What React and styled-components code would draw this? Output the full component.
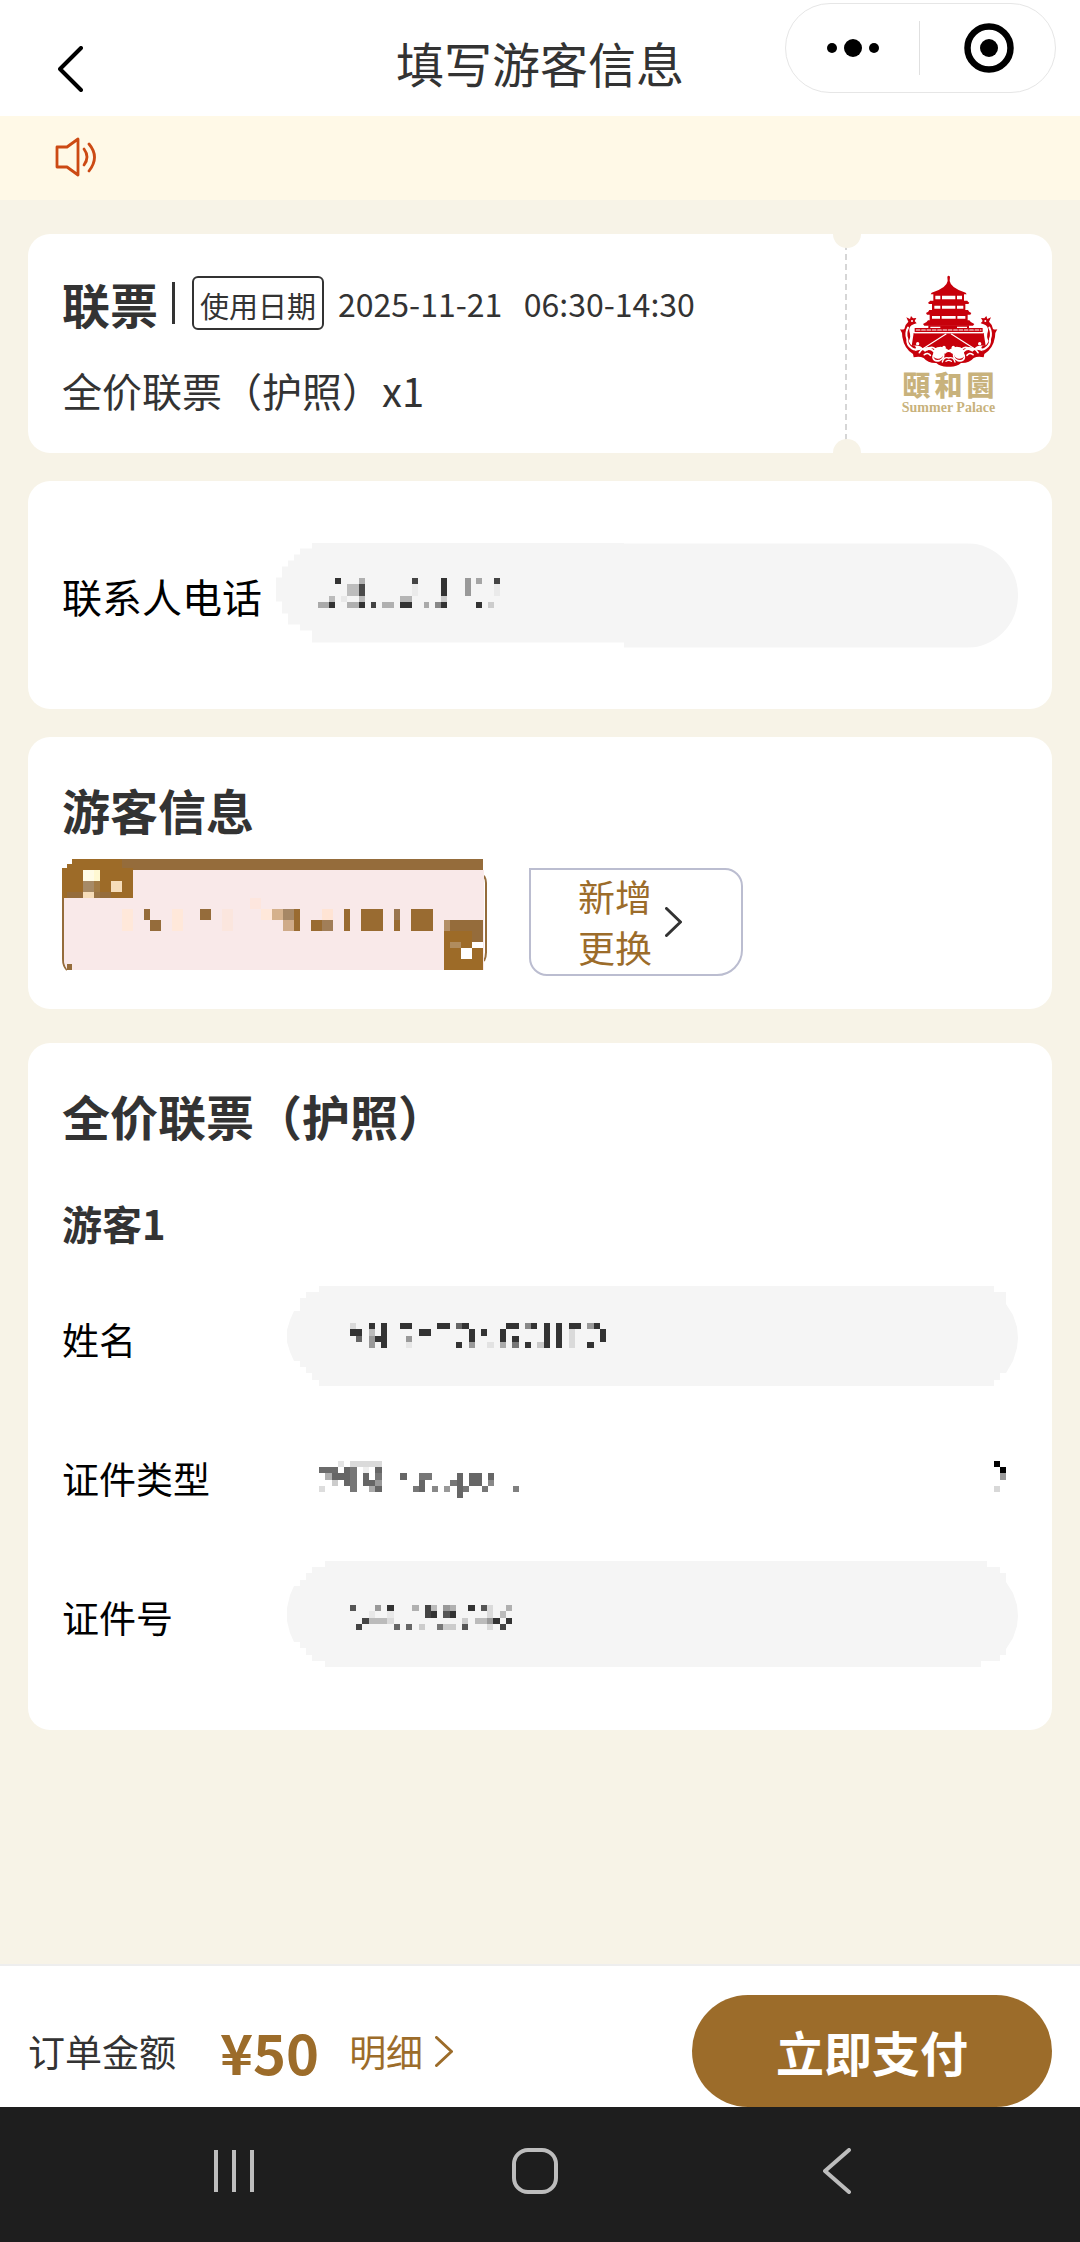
import React from 'react';
import styled, { createGlobalStyle } from 'styled-components';

const GlobalStyle = createGlobalStyle`
    * {
        box-sizing: border-box;
    }
    body {
        margin: 0;
        background: #f7f3e7;
        color: #333333;
        font-family: 'Noto Sans CJK SC', 'Noto Sans', sans-serif;
    }
    h1, h2, h3, p {
        margin: 0;
    }
    button, input, select {
        font-family: inherit;
        padding: 0;
        border: none;
        background: transparent;
        color: inherit;
    }
    svg {
        display: block;
        flex: none;
    }
`

const Page = styled.div`
    min-height: 100vh;
    display: flex;
    flex-direction: column;
`

const Header = styled.header`
    display: grid;
    grid-template-columns: 1fr auto 1fr;
    height: 116px;
    background: #ffffff;
    .header__back {
        justify-self: start;
        align-self: start;
        margin: 46px 0 0 58px;
    }
    .header__title {
        margin-top: 30px;
        font-size: 48px;
        font-weight: normal;
        line-height: 64px;
    }
`

const Capsule = styled.div`
    justify-self: end;
    margin: 3px 24px 0 0;
    display: flex;
    align-items: center;
    width: 271px;
    height: 90px;
    border: 1px solid #e6e6e6;
    border-radius: 45px;
    button {
        flex: 1;
        display: flex;
        justify-content: center;
    }
    button + button {
        height: 54px;
        align-items: center;
        padding-left: 2px;
        border-left: 1px solid #e0e0e0;
    }
`

const Notice = styled.div`
    display: flex;
    align-items: center;
    height: 84px;
    padding: 0 55px 2px;
    background: #fff9e7;
`

const Content = styled.main`
    flex: 1;
    display: flex;
    flex-direction: column;
    gap: 28px;
    padding: 34px 28px;
`

const Card = styled.section`
    padding: 40px 34px 33px;
    border-radius: 22px;
    background: #ffffff;
`

const TicketCard = styled(Card)`
    position: relative;
    display: grid;
    grid-template-columns: 1fr 207px;
    padding: 0;
    overflow: hidden;
`

const TicketInfo = styled.div`
    padding: 42px 34px 35px;
    .ticket__row {
        display: flex;
        align-items: center;
        gap: 14px;
        height: 54px;
        white-space: pre;
    }
    .ticket__name {
        font-size: 48px;
        line-height: 54px;
    }
    .ticket__line {
        width: 3px;
        height: 42px;
        margin-right: 3px;
        background: #333333;
    }
    .ticket__badge {
        height: 54px;
        padding: 2px 6px 0;
        border: 2px solid #333333;
        border-radius: 6px;
        font-size: 29px;
        line-height: 50px;
    }
    .ticket__date {
        font-size: 32px;
        line-height: 54px;
    }
    .ticket__type {
        margin-top: 32px;
        font-size: 40px;
        line-height: 56px;
    }
`

const TicketStub = styled.div`
    display: flex;
    flex-direction: column;
    align-items: center;
    padding: 40px 0 0 0;
    background: repeating-linear-gradient(#d6d6d6 0 6px, #ffffff 6px 10px) left / 2px 100% no-repeat;
`

const Notch = styled.span`
    position: absolute;
    right: 191px;
    ${({ $side }) => $side}: -14px;
    width: 28px;
    height: 28px;
    border-radius: 50%;
    background: #f7f3e7;
`

const LogoName = styled.div`
    display: flex;
    gap: 4px;
    color: #c8b27c;
    font-family: 'Noto Sans CJK TC', sans-serif;
    font-size: 28px;
    font-weight: 900;
    line-height: 32px;
`

const LogoCaption = styled.div`
    color: #c8b27c;
    font-family: 'Liberation Serif', serif;
    font-size: 14px;
    font-weight: bold;
    line-height: 16px;
`

const ContactCard = styled(Card)`
    display: flex;
    align-items: center;
    gap: 14px;
    height: 228px;
    padding: 0 34px;
`

const Label = styled.label`
    padding-top: ${({ $large }) => ($large ? 2 : 6)}px;
    color: #000000;
    font-size: ${({ $large }) => ($large ? 40 : 37)}px;
    line-height: 56px;
    white-space: nowrap;
`

const Field = styled.div`
    position: relative;
    flex: 1;
    height: ${({ $height }) => $height || 106}px;
    border-radius: ${({ $radius }) => $radius || '0'};
    background: ${({ $plain }) => ($plain ? 'transparent' : '#f5f5f5')};
    clip-path: ${({ $shape }) => $shape || 'none'};
    input, select {
        width: 100%;
        height: 100%;
        appearance: none;
        outline: none;
    }
`

const Mask = styled.svg`
    position: absolute;
    top: ${({ $top }) => $top}px;
    ${({ $right }) => ($right ? 'right: 12px' : '')};
    left: ${({ $left }) => ($left ? `${$left}px` : 'auto')};
    pointer-events: none;
`

const Title = styled.h2`
    font-size: 48px;
    font-weight: bold;
    line-height: 64px;
`

const Subtitle = styled.h3`
    margin: 48px 0 32px;
    font-size: 40px;
    font-weight: bold;
    line-height: 56px;
`

const VisitorRow = styled.div`
    display: flex;
    align-items: flex-start;
    gap: 42px;
    margin-top: 18px;
`

const AddButton = styled.button`
    display: flex;
    justify-content: center;
    align-items: center;
    gap: 13px;
    width: 214px;
    height: 108px;
    margin-top: 9px;
    padding-right: 12px;
    border: 2px solid #bbbdd0;
    border-radius: 0 18px 26px 18px;
    color: #9c6c2a;
    font-size: 37px;
    line-height: 51px;
    span {
        width: 74px;
    }
`

const FormCard = styled(Card)`
    margin-top: 6px;
    padding-bottom: 63px;
`

const FormRows = styled.div`
    display: grid;
    gap: 33px;
`

const FormRow = styled.div`
    display: grid;
    grid-template-columns: 225px 1fr;
    align-items: center;
    height: 106px;
`

const PayBar = styled.footer`
    display: flex;
    justify-content: space-between;
    height: 143px;
    padding: 29px 28px 0;
    border-top: 2px solid #eeeeee;
    background: #ffffff;
`

const Total = styled.div`
    display: flex;
    align-items: center;
    height: 112px;
    font-size: 37px;
    .total__price {
        margin: 0 30px 0 44px;
        color: #9c6c2a;
        font-size: 56px;
        line-height: 64px;
    }
    .total__detail {
        display: flex;
        align-items: center;
        gap: 12px;
        color: #9c6c2a;
        text-decoration: none;
    }
`

const PayButton = styled.button`
    width: 360px;
    height: 112px;
    border-radius: 56px;
    background: #9c6c2a;
    color: #ffffff;
    font-size: 48px;
    font-weight: bold;
`

const SystemNav = styled.nav`
    display: grid;
    grid-template-columns: repeat(3, 1fr);
    height: 135px;
    padding: 0 92px 7px 83px;
    background: #1e1e1e;
    button {
        display: flex;
        justify-content: center;
        align-items: center;
    }
`

// masked values: [x, y, width, height, colour] in cells
const phoneCells = [
    [17, 0, 6, 6, '#333'], [41, 0, 6, 6, '#b0b0b0'], [29, 6, 12, 12, '#bdbdbd'], [41, 6, 6, 12, '#4a4a4a'],
    [41, 18, 6, 6, '#bbb'], [29, 24, 12, 6, '#b0b0b0'], [41, 24, 6, 6, '#333'], [11, 18, 6, 6, '#bbb'],
    [0, 24, 11, 6, '#aaa'], [11, 24, 6, 6, '#333'], [23, 18, 6, 6, '#e8e8e8'], [53, 24, 5, 6, '#444'],
    [64, 24, 12, 6, '#b0b0b0'], [82, 18, 12, 6, '#b5b5b5'], [82, 24, 12, 6, '#333'], [94, 0, 6, 6, '#444'],
    [94, 6, 6, 12, '#ebebeb'], [106, 24, 5, 6, '#aaa'], [117, 24, 6, 6, '#888'], [123, 0, 6, 18, '#333'],
    [123, 18, 6, 6, '#ccc'], [123, 24, 6, 6, '#333'], [147, 0, 6, 18, '#999'], [158, 0, 6, 6, '#a5a5a5'],
    [158, 24, 6, 6, '#333'], [170, 24, 6, 6, '#ccc'], [176, 0, 6, 6, '#444'], [176, 6, 6, 12, '#eaeaea'],
];

const nameCells = [
    [0, 0, 1, 1, '#dadada'], [3, 0, 1, 1, '#333'], [5, 0, 1, 4, '#333'], [8, 0, 2, 1, '#333'], [14, 0, 2, 1, '#333'],
    [17, 0, 1, 1, '#666'], [18, 0, 1, 1, '#333'], [25, 0, 2, 1, '#333'], [28, 0, 1, 1, '#888'], [29, 0, 1, 1, '#333'],
    [31, 0, 1, 4, '#333'], [33, 0, 1, 4, '#333'], [35, 0, 2, 1, '#333'], [38, 0, 1, 1, '#999'], [39, 0, 1, 1, '#333'],
    [0, 1, 2, 1, '#333'], [3, 1, 1, 1, '#bbb'], [11, 1, 2, 1, '#333'], [19, 1, 1, 2, '#333'], [21, 1, 1, 1, '#333'],
    [24, 1, 1, 2, '#333'], [35, 1, 1, 3, '#dadada'], [40, 1, 1, 2, '#333'], [1, 2, 1, 1, '#666'], [3, 2, 1, 1, '#999'],
    [4, 2, 1, 1, '#333'], [9, 2, 1, 1, '#999'], [26, 2, 1, 1, '#333'], [3, 3, 1, 1, '#999'], [9, 3, 1, 1, '#e6e6e6'],
    [17, 3, 1, 1, '#333'], [19, 3, 1, 1, '#999'], [22, 3, 1, 1, '#e2e2e2'], [24, 3, 1, 1, '#aaa'], [26, 3, 1, 1, '#777'],
    [28, 3, 1, 1, '#333'], [30, 3, 1, 1, '#c8c8c8'], [38, 3, 1, 1, '#333'],
];

const typeCells = [
    [3, 0, 1, 1, '#e4e4e4'], [5, 0, 5, 1, '#dadada'], [0, 1, 3, 1, '#6b6b6b'], [4, 1, 1, 1, '#666'], [5, 1, 1, 1, '#777'],
    [7, 1, 1, 1, '#eee'], [9, 1, 1, 1, '#666'], [1, 2, 1, 1, '#b0b0b0'], [2, 2, 3, 1, '#666'], [5, 2, 1, 1, '#777'],
    [7, 2, 1, 2, '#666'], [9, 2, 1, 1, '#777'], [13, 2, 1, 1, '#666'], [16, 2, 2, 1, '#777'], [22, 2, 1, 4, '#666'],
    [24, 2, 2, 2, '#666'], [27, 2, 1, 1, '#666'], [2, 3, 1, 1, '#ccc'], [4, 3, 1, 1, '#666'], [5, 3, 1, 2, '#777'],
    [8, 3, 1, 1, '#666'], [9, 3, 1, 1, '#999'], [16, 3, 1, 2, '#666'], [21, 3, 1, 1, '#777'], [27, 3, 1, 1, '#888'],
    [0, 4, 1, 1, '#ddd'], [8, 4, 1, 1, '#aaa'], [9, 4, 1, 1, '#666'], [15, 4, 1, 1, '#777'], [18, 4, 1, 1, '#888'],
    [20, 4, 1, 1, '#999'], [23, 4, 1, 1, '#777'], [26, 4, 1, 1, '#777'], [31, 4, 1, 1, '#808080'],
];

const numberCells = [
    [0, 0, 1, 1, '#555'], [4, 0, 1, 1, '#999'], [6, 0, 1, 1, '#333'], [10, 0, 1, 1, '#b0b0b0'], [12, 0, 1, 2, '#444'],
    [13, 0, 1, 1, '#bbb'], [15, 0, 1, 1, '#999'], [16, 0, 1, 1, '#b0b0b0'], [19, 0, 1, 1, '#333'], [21, 0, 1, 1, '#555'],
    [22, 0, 1, 2, '#dadada'], [25, 0, 1, 1, '#b0b0b0'], [3, 1, 1, 1, '#e8e8e8'], [6, 1, 1, 1, '#e8e8e8'],
    [13, 1, 1, 1, '#333'], [15, 1, 1, 1, '#555'], [16, 1, 1, 1, '#333'], [24, 1, 1, 1, '#bbb'], [2, 2, 1, 1, '#444'],
    [3, 2, 3, 1, '#bbb'], [6, 2, 1, 1, '#dadada'], [18, 2, 1, 1, '#ccc'], [20, 2, 2, 1, '#bbb'], [22, 2, 1, 1, '#999'],
    [23, 2, 1, 1, '#333'], [25, 2, 1, 1, '#333'], [1, 3, 1, 1, '#444'], [7, 3, 1, 1, '#666'], [9, 3, 1, 1, '#666'],
    [11, 3, 1, 1, '#ccc'], [14, 3, 1, 1, '#777'], [15, 3, 2, 1, '#ccc'], [18, 3, 1, 1, '#555'], [22, 3, 1, 1, '#dadada'],
    [24, 3, 1, 1, '#444'],
];

const arrowCells = [
    [0, 0, 1, 1, '#000'], [1, 1, 1, 1, '#000'], [1, 2, 1, 1, '#999'], [0, 4, 1, 1, '#d8d8d8'],
];

const chipCells = [
    [30, 0, 1233, 33, '#956c3b'], [30, 0, 150, 33, '#9d6b28'], [15, 15, 15, 18, '#9d6b28'], [0, 27, 213, 90, '#9d6b28'],
    [63, 33, 34, 33, '#fffbe6'], [97, 33, 17, 33, '#fff8d2'], [63, 66, 34, 33, '#a68a66'], [97, 66, 17, 33, '#a27b44'],
    [147, 66, 33, 33, '#f6ddba'], [63, 99, 34, 18, '#f6ddba'], [97, 99, 17, 18, '#9a7546'], [114, 99, 33, 18, '#956c3b'],
    [15, 99, 48, 18, '#956c3b'], [180, 150, 33, 66, '#ffe8da'], [246, 150, 18, 33, '#956c3b'],
    [264, 183, 33, 33, '#956c3b'], [330, 150, 34, 66, '#ffe8da'], [414, 150, 33, 33, '#956c3b'],
    [480, 150, 33, 66, '#fbe6de'], [564, 117, 33, 33, '#fde6de'], [597, 150, 33, 33, '#ffe8da'],
    [630, 150, 33, 33, '#d5b18c'], [663, 150, 33, 33, '#a68765'], [663, 183, 33, 33, '#cfab89'],
    [696, 150, 18, 66, '#996b31'], [747, 183, 33, 33, '#996b31'], [780, 183, 33, 33, '#a17e58'],
    [780, 150, 33, 33, '#ffe4d4'], [846, 150, 18, 66, '#996b31'], [897, 150, 66, 66, '#996b31'],
    [996, 150, 18, 33, '#9a7650'], [996, 183, 18, 33, '#996b31'], [1047, 150, 66, 66, '#996b31'],
    [1146, 183, 117, 150, '#9d6b28'], [1146, 183, 18, 33, '#b38f66'], [1164, 183, 99, 33, '#956c3b'],
    [1230, 216, 33, 33, '#956c3b'], [1164, 249, 33, 18, '#b08c5e'], [1230, 249, 33, 18, '#fff'],
    [1197, 267, 33, 33, '#fff'], [15, 315, 15, 18, '#956c3b'],
];

const shapes = {
    phone: `polygon(36px 0, 348px 0, 348px 1px, 100% 1px, 100% 100%, 348px 100%, 348px 100px, 36px 100px, 36px 88px,
        24px 88px, 24px 82px, 12px 82px, 12px 71px, 6px 71px, 6px 59px, 0 59px, 0 35px, 6px 35px, 6px 24px, 12px 24px,
        12px 18px, 18px 18px, 18px 12px, 24px 12px, 24px 6px, 36px 6px)`,
    name: `polygon(32px 0, calc(100% - 24px) 0, calc(100% - 24px) 6px, calc(100% - 12px) 6px, calc(100% - 12px) 18px,
        calc(100% - 5px) 29px, calc(100% - 1px) 41px, 100% 52px, calc(100% - 1px) 62px, calc(100% - 5px) 75px,
        calc(100% - 12px) 87px, calc(100% - 18px) 87px, calc(100% - 18px) 94px, calc(100% - 24px) 94px,
        calc(100% - 24px) 100px, 32px 100px, 32px 94px, 25px 94px, 25px 87px, 19px 87px, 19px 81px, 13px 81px,
        13px 75px, 7px 75px, 3px 66px, 0 56px, 0 44px, 3px 34px, 7px 25px, 13px 25px, 13px 12px, 19px 12px, 19px 6px,
        32px 6px)`,
    number: `polygon(38px 0, calc(100% - 31px) 0, calc(100% - 31px) 6px, calc(100% - 18px) 6px, calc(100% - 18px) 12px,
        calc(100% - 12px) 12px, calc(100% - 12px) 21px, calc(100% - 5px) 32px, calc(100% - 1px) 44px, 100% 55px,
        calc(100% - 1px) 65px, calc(100% - 5px) 77px, calc(100% - 12px) 88px, calc(100% - 12px) 94px,
        calc(100% - 18px) 94px, calc(100% - 18px) 100px, calc(100% - 37px) 100px, calc(100% - 37px) 106px, 38px 106px,
        38px 100px, 25px 100px, 25px 94px, 19px 94px, 19px 87px, 13px 87px, 13px 81px, 7px 81px, 3px 72px, 0 60px,
        0 47px, 3px 34px, 7px 25px, 13px 25px, 13px 19px, 19px 19px, 19px 12px, 25px 12px, 25px 6px, 38px 6px)`,
};

const Cells = ({ cells }) => cells.map(([x, y, w, h, fill], i) => (
    <rect key={i} x={x} y={y} width={w} height={h} fill={fill} shapeRendering='crispEdges' />
))

const MaskedValue = ({ cells, cols, rows, width, height, ...rest }) => (
    <Mask
        width={width}
        height={height}
        viewBox={`0 0 ${cols} ${rows}`}
        preserveAspectRatio='none'
        aria-hidden='true'
        {...rest}
    >
        <Cells cells={cells} />
    </Mask>
)

const Chevron = ({ width, height, left, color, stroke = 4 }) => {
    const a = stroke / 2;
    const near = left ? width - a : a;
    const far = left ? a : width - a;
    return (
        <svg width={width} height={height} fill='none' stroke={color} strokeWidth={stroke} strokeLinecap='round' strokeLinejoin='round' aria-hidden='true'>
            <path d={`M${near} ${a} L${far} ${height / 2} L${near} ${height - a}`} />
        </svg>
    )
}

const SpeakerIcon = () => (
    <svg width='44' height='42' viewBox='0 0 44 42' fill='none' stroke='#cc4a14' strokeWidth='2.8' strokeLinecap='round' strokeLinejoin='round' aria-hidden='true'>
        <path d='M2 11 H12 L23 3 V39 L12 31 H2 Z' />
        <path d='M29 13 Q35 21 29 29' />
        <path d='M34 8 Q45 21 34 35' />
    </svg>
)

const PalaceLogo = () => (
    <svg width='100' height='94' viewBox='10 10 300 282' role='img' aria-label='Summer Palace'>
        <g fill='#c7000b'>
            <path d='M155 18 Q159 12 163 18 L162 31 Q164 42 174 49 Q190 61 210 66 L213 71 H105 L108 66 Q128 61 144 49 Q154 42 156 31 Z' />
            <path d='M113 70 H205 V93 H113 Z' />
            <path d='M103 90 H215 Q216 93 221 96 L218 100 H100 L97 96 Q102 93 103 90 Z' />
            <path d='M109 99 H209 V121 H109 Z' />
            <path d='M101 118 H217 Q219 124 227 127 L224 132 H94 L91 127 Q99 124 101 118 Z' />
            <path d='M102 130 H216 V151 H102 Z' />
            <path d='M97 149 H221 Q224 156 236 160 L232 165 H86 L82 160 Q94 156 97 149 Z' />
            <path d='M98 164 H220 V174 H98 Z' />
            <path d='M57 172 H261 V184 H57 Z' />
            <path d='M54 187 H264 L270 226 Q246 220 236 234 Q218 222 204 238 Q186 218 159 238 Q132 218 114 238 Q100 222 82 234 Q72 220 48 226 Z' />
            <path d='M13 176 Q21 178 26 175 Q29 160 38 153 L32 140 L43 145 L46 136 L52 143 L62 142 L57 151 L63 158 L54 161 Q39 166 41 181 Q47 200 39 211 Q47 229 56 225 Q66 231 57 242 Q79 232 88 243 Q101 232 113 245 Q108 262 125 264 Q137 266 143 253 Q157 231 175 253 Q181 266 193 264 Q210 262 205 245 Q217 232 230 243 Q239 232 261 242 Q252 231 262 225 Q271 229 279 211 Q271 200 277 181 Q279 166 264 161 L255 158 L261 151 L256 142 L266 143 L272 136 L275 145 L286 140 L280 153 Q289 160 292 175 Q297 178 305 176 Q298 184 298 199 Q292 235 266 250 L264 260 Q247 255 234 262 Q221 278 196 277 Q181 290 159 288 Q137 290 122 277 Q97 278 84 262 Q71 255 54 260 L52 250 Q26 235 20 199 Q20 184 13 176 Z' />
        </g>
        <g fill='#fff'>
            <path d='M119 75 H134 V86 H119 Z M139 75 H179 V86 H139 Z M184 75 H199 V86 H184 Z' />
            <path d='M116 105 H134 V114 H116 Z M139 105 H179 V114 H139 Z M184 105 H203 V114 H184 Z' />
            <path d='M109 136 H133 V144 H109 Z M138 136 H180 V144 H138 Z M185 136 H209 V144 H185 Z' />
            <path d='M104 168 H134 V172 H104 Z M184 168 H214 V172 H184 Z' />
            <circle cx='49' cy='151' r='3' />
            <circle cx='269' cy='151' r='3' />
            <circle cx='145' cy='230' r='5' />
            <circle cx='173' cy='230' r='5' />
            <circle cx='66' cy='219' r='5' />
            <circle cx='252' cy='219' r='5' />
        </g>
        <g fill='none' stroke='#fff' strokeWidth='3.4' strokeLinecap='round'>
            <path d='M62 178 H256' strokeDasharray='11 5' />
            <path d='M57 187 H261' strokeWidth='2.4' />
            <path d='M151 190 L77 237 M167 190 L241 237' />
            <path d='M37 171 Q28 188 35 205 Q33 223 49 233 Q60 240 65 232' strokeWidth='6' />
            <path d='M281 171 Q290 188 283 205 Q285 223 269 233 Q258 240 253 232' strokeWidth='6' />
            <path d='M71 246 Q80 228 94 237 Q107 225 119 235 Q136 229 143 245 Q148 263 133 269 Q116 274 112 261 Q111 248 123 250 Q130 253 124 259' strokeWidth='5' />
            <path d='M247 246 Q238 228 224 237 Q211 225 199 235 Q182 229 175 245 Q170 263 185 269 Q202 274 206 261 Q207 248 195 250 Q188 253 194 259' strokeWidth='5' />
            <path d='M86 252 Q97 244 104 254 M232 252 Q221 244 214 254' strokeWidth='5' />
            <path d='M140 274 Q145 257 159 262 Q173 257 178 274 M151 272 Q159 266 167 272 M148 247 Q159 237 170 247' strokeWidth='4' />
        </g>
    </svg>
)

const VisitorChip = () => (
    <button type='button' aria-label='游客'>
        <svg width='425' height='112' viewBox='0 0 1275 336' aria-hidden='true'>
            <path d='M3 60 V300 Q3 321 15 333 M1266 50 Q1272 60 1272 72 V280 Q1272 296 1266 306' fill='none' stroke='#956c3b' strokeWidth='6' />
            <path d='M6 33 H1266 V333 H16 Q6 318 6 300 Z' fill='#f9e9e9' />
            <Cells cells={chipCells} />
        </svg>
    </button>
)

const App = () => {
    return (
        <Page>
            <GlobalStyle />
            <Header>
                <button type='button' className='header__back' aria-label='返回'>
                    <Chevron width={25} height={46} left color='#000000' />
                </button>
                <h1 className='header__title'>填写游客信息</h1>
                <Capsule>
                    <button type='button' aria-label='更多'>
                        <svg width='54' height='18' aria-hidden='true'>
                            <circle cx='6' cy='9' r='5' />
                            <circle cx='27' cy='9' r='9' />
                            <circle cx='48' cy='9' r='5' />
                        </svg>
                    </button>
                    <button type='button' aria-label='关闭'>
                        <svg width='50' height='50' aria-hidden='true'>
                            <circle cx='25' cy='25' r='21.5' fill='none' stroke='#000' strokeWidth='6.5' />
                            <circle cx='25' cy='25' r='9' />
                        </svg>
                    </button>
                </Capsule>
            </Header>
            <Notice>
                <SpeakerIcon />
            </Notice>
            <Content>
                <TicketCard>
                    <TicketInfo>
                        <div className='ticket__row'>
                            <h2 className='ticket__name'>联票</h2>
                            <span className='ticket__line' />
                            <span className='ticket__badge'>使用日期</span>
                            <span className='ticket__date'>{'2025-11-21   06:30-14:30'}</span>
                        </div>
                        <p className='ticket__type'>全价联票（护照）x1</p>
                    </TicketInfo>
                    <TicketStub>
                        <PalaceLogo />
                        <LogoName>
                            <span>頤</span>
                            <span>和</span>
                            <span>園</span>
                        </LogoName>
                        <LogoCaption>Summer Palace</LogoCaption>
                    </TicketStub>
                    <Notch $side='top' />
                    <Notch $side='bottom' />
                </TicketCard>

                <ContactCard>
                    <Label htmlFor='phone' $large>联系人电话</Label>
                    <Field $height={105} $radius='0 52px 52px 0' $shape={shapes.phone}>
                        <input id='phone' type='tel' />
                        <MaskedValue cells={phoneCells} cols={182} rows={30} width={182} height={30} $left={42} $top={35} />
                    </Field>
                </ContactCard>

                <Card>
                    <Title>游客信息</Title>
                    <VisitorRow>
                        <VisitorChip />
                        <AddButton type='button'>
                            <span>新增更换</span>
                            <Chevron width={17} height={30} color='#333333' stroke={3} />
                        </AddButton>
                    </VisitorRow>
                </Card>

                <FormCard>
                    <Title>全价联票（护照）</Title>
                    <Subtitle>游客1</Subtitle>
                    <FormRows>
                        <FormRow>
                            <Label htmlFor='name'>姓名</Label>
                            <Field $height={100} $shape={shapes.name}>
                                <input id='name' type='text' />
                                <MaskedValue cells={nameCells} cols={41} rows={4} width={256} height={25} $left={63} $top={37} />
                            </Field>
                        </FormRow>
                        <FormRow>
                            <Label htmlFor='idType'>证件类型</Label>
                            <Field $plain>
                                <select id='idType' />
                                <MaskedValue cells={typeCells} cols={32} rows={6} width={200} height={37} $left={32} $top={39} />
                                <MaskedValue cells={arrowCells} cols={2} rows={5} width={12} height={31} $right $top={39} />
                            </Field>
                        </FormRow>
                        <FormRow>
                            <Label htmlFor='idNumber'>证件号</Label>
                            <Field $shape={shapes.number}>
                                <input id='idNumber' type='text' />
                                <MaskedValue cells={numberCells} cols={26} rows={4} width={162} height={25} $left={63} $top={44} />
                            </Field>
                        </FormRow>
                    </FormRows>
                </FormCard>
            </Content>
            <PayBar>
                <Total>
                    <span>订单金额</span>
                    <b className='total__price'>¥50</b>
                    <a className='total__detail' href='#detail'>
                        明细
                        <Chevron width={18} height={31} color='#9c6c2a' stroke={3} />
                    </a>
                </Total>
                <PayButton type='button'>立即支付</PayButton>
            </PayBar>
            <SystemNav>
                <button type='button' aria-label='最近任务'>
                    <svg width='42' height='44' stroke='#bdbdbd' strokeWidth='4' aria-hidden='true'>
                        <path d='M3 1 V43 M21 1 V43 M39 1 V43' />
                    </svg>
                </button>
                <button type='button' aria-label='主屏幕'>
                    <svg width='46' height='46' fill='none' stroke='#bdbdbd' strokeWidth='4' aria-hidden='true'>
                        <rect x='2' y='2' width='42' height='42' rx='14' />
                    </svg>
                </button>
                <button type='button' aria-label='后退'>
                    <Chevron width={28} height={46} left color='#bdbdbd' />
                </button>
            </SystemNav>
        </Page>
    )
}

export default App
